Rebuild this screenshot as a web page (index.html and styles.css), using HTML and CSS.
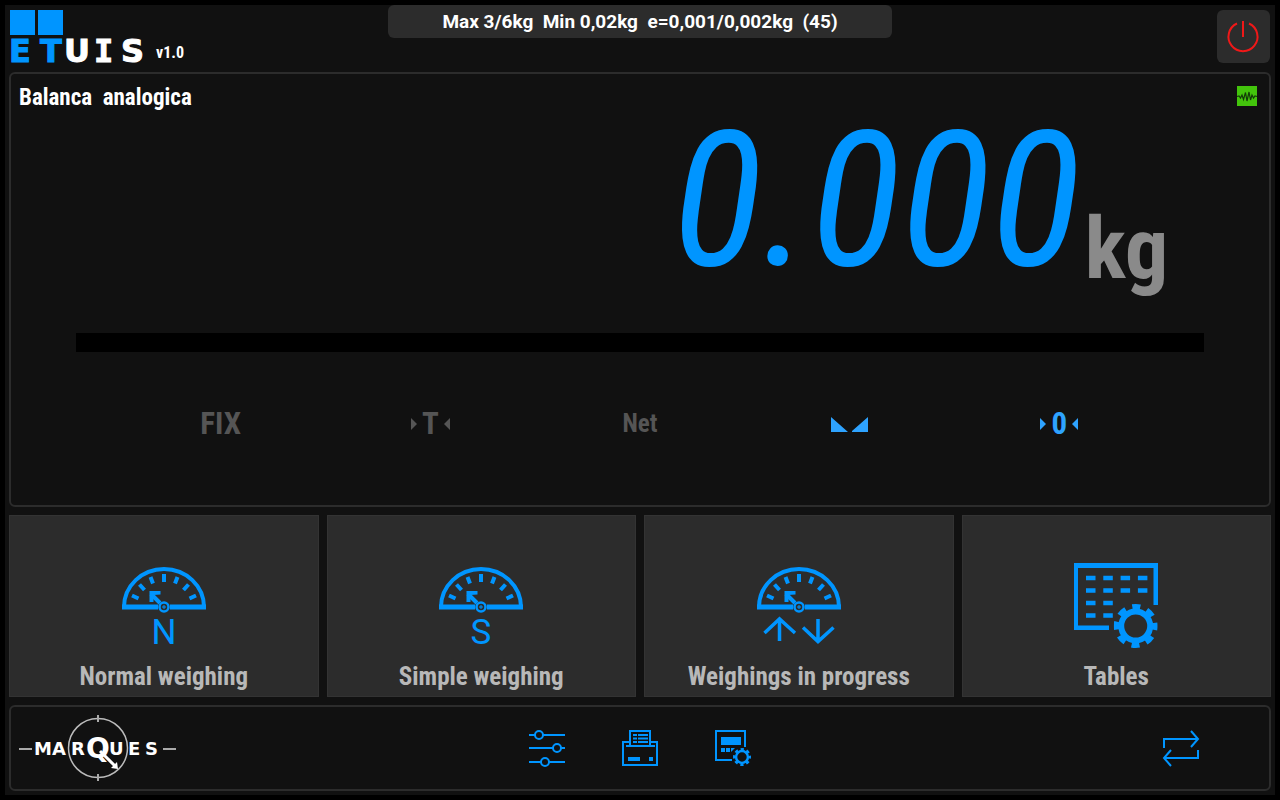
FILE: index.html
```html
<!DOCTYPE html>
<html lang="en">
<head>
    <meta charset="UTF-8">
    <meta name="viewport" content="width=device-width, initial-scale=1.0">
    <title>ETUIS v1.0</title>
    <link rel="stylesheet" href="styles.css">
</head>
<body>
    <!-- shared icon parts -->
    <svg class="defs" width="0" height="0" aria-hidden="true">
        <symbol id="gauge" viewBox="0 0 84 84">
            <path d="M2 44A40 38 0 0 1 82 44" fill="none" stroke="currentColor" stroke-width="4"/>
            <path d="M0 44H36M48 44H84" stroke="currentColor" stroke-width="5"/>
            <path d="M42 11V19M55.500 14L53 20.500M66.500 21.500L61.500 27M74 32.500L67.500 35.500M28.500 14L31 20.500M17.500 21.500L22.500 27M10 32.500L16.500 35.500" stroke="currentColor" stroke-width="4"/>
            <path d="M38 40L29 31" stroke="currentColor" stroke-width="4"/>
            <path d="M27.500 39V28H38.500V31.500L31.500 32V39Z" fill="currentColor"/>
            <circle cx="42" cy="44" r="4.500" fill="none" stroke="currentColor" stroke-width="2.500"/>
            <path d="M42 42V46M40 44H44" stroke="currentColor" stroke-width="1"/>
        </symbol>
        <symbol id="gear" viewBox="0 0 44 44">
            <circle cx="22" cy="22" r="14.500" fill="none" stroke="currentColor" stroke-width="6"/>
            <circle cx="22" cy="22" r="19" fill="none" stroke="currentColor" stroke-width="6" stroke-dasharray="8 6.923" stroke-dashoffset="4"/>
        </symbol>
    </svg>

    <div class="app">
        <header class="topbar">
            <div class="brand">
                <svg class="logo" viewBox="0 0 137 53" role="img" aria-label="ETUIS">
                    <path d="M0 0H25V25H0ZM28 0H53V25H28Z" fill="#0095ff"/>
                    <text class="blue" y="52" x="-1 30">ET</text>
                    <text class="white" y="52" x="54">U<tspan class="slab" x="84">I</tspan><tspan x="111">S</tspan></text>
                </svg>
                <span class="version">v1.0</span>
            </div>
            <div class="metrology">Max 3/6kg  Min 0,02kg  e=0,001/0,002kg  (45)</div>
            <button class="power" type="button" aria-label="Power off">
                <svg viewBox="0 0 32 32" aria-hidden="true">
                    <path d="M9 2.500A14.500 14.500 0 1 0 21 2.500M15 0V16" fill="none" stroke="#f01818" stroke-width="2"/>
                </svg>
            </button>
        </header>

        <main class="scale">
            <div class="scale-head">
                <h1>Balanca  analogica</h1>
                <svg class="signal" viewBox="0 0 20 20" role="img" aria-label="Analog signal">
                    <path d="M0 0H20V20H0Z" fill="#43c40c"/>
                    <path d="M0 10.500L2 10L3.500 12L5 9L6.500 13.500L8.500 6.500L10 15L12 6L13.500 14L15 9L16.500 12L18 10L20 10.500" fill="none" stroke="#123a08" stroke-width="1.200"/>
                </svg>
            </div>
            <div class="reading">
                <output class="value">0.000</output>
                <span class="unit">kg</span>
            </div>
            <div class="load-bar" role="meter" aria-label="Load" aria-valuemin="0" aria-valuemax="6" aria-valuenow="0"></div>
            <ul class="flags">
                <li>FIX</li>
                <li>
                    <svg viewBox="0 0 6 12" aria-hidden="true"><path d="M0 0L6 6L0 12Z"/></svg>
                    T
                    <svg viewBox="0 0 6 12" aria-hidden="true"><path d="M6 0L0 6L6 12Z"/></svg>
                </li>
                <li class="small">Net</li>
                <li class="on">
                    <svg class="stable" viewBox="0 0 37 15" role="img" aria-label="Stable"><path d="M0 0L17 15H0ZM37 0V15H21V14Z"/></svg>
                </li>
                <li class="on">
                    <svg viewBox="0 0 6 12" aria-hidden="true"><path d="M0 0L6 6L0 12Z"/></svg>
                    0
                    <svg viewBox="0 0 6 12" aria-hidden="true"><path d="M6 0L0 6L6 12Z"/></svg>
                </li>
            </ul>
        </main>

        <nav class="modes">
            <button type="button">
                <svg viewBox="0 0 84 84" aria-hidden="true">
                    <use href="#gauge"/>
                    <text x="42" y="81">N</text>
                </svg>
                Normal weighing
            </button>
            <button type="button">
                <svg viewBox="0 0 84 84" aria-hidden="true">
                    <use href="#gauge"/>
                    <text x="42" y="81">S</text>
                </svg>
                Simple weighing
            </button>
            <button type="button">
                <svg viewBox="0 0 84 84" aria-hidden="true">
                    <use href="#gauge"/>
                    <path d="M22.500 78V56M7.500 70L22.500 56L38 70M61 56V78M46 64.500L61 78.500L76.500 64.500" fill="none" stroke="currentColor" stroke-width="3.500"/>
                </svg>
                Weighings in progress
            </button>
            <button type="button">
                <svg viewBox="0 0 84 84" aria-hidden="true">
                    <path d="M0 0H84V42H79.500V5H4V62.500H35V67H0Z" fill="currentColor"/>
                    <path d="M12 15H74M12 27.500H74" stroke="currentColor" stroke-width="4.500" stroke-dasharray="9.500 7.800"/>
                    <path d="M12 40H39M12 52.500H39" stroke="currentColor" stroke-width="4.500" stroke-dasharray="9.500 7.800"/>
                    <use href="#gear" x="39.700" y="41" width="44" height="44"/>
                </svg>
                Tables
            </button>
        </nav>

        <footer class="toolbar">
            <svg class="marques" viewBox="0 0 158 66" role="img" aria-label="Marques">
                <circle cx="79" cy="33" r="29.500" fill="none" stroke="#bbb" stroke-width="1.500"/>
                <path d="M79 0V7M79 59V66M0 34H13M144 34H157" stroke="#aaa" stroke-width="2"/>
                <path d="M81 36L96 51" stroke="#fff" stroke-width="3"/>
                <path d="M99 54L92 53L98 47Z" fill="#fff"/>
                <text y="40" x="15 33 52">MAR</text>
                <text class="q" x="67" y="43">Q</text>
                <text y="40" x="90 109 126">UES</text>
            </svg>
            <div class="tools">
                <button type="button" aria-label="Settings">
                    <svg viewBox="0 0 36 36" aria-hidden="true">
                        <path d="M0 5H6M14 5H36M0 18H24M32 18H36M0 32H12M20 32H36"/>
                        <circle cx="10" cy="5" r="4"/>
                        <circle cx="28" cy="18" r="4"/>
                        <circle cx="16" cy="32" r="4"/>
                    </svg>
                </button>
                <button type="button" aria-label="Print">
                    <svg viewBox="0 0 36 36" aria-hidden="true">
                        <path d="M8 12H1V35H35V12H28M8 16V1H28V16M4 16H33"/>
                        <path d="M11 5H15M16 5H26M11 8.500H15M16 8.500H26M11 12H15M16 12H26"/>
                        <path class="solid" d="M6 27H18V31H6ZM27 27H31V31H27Z"/>
                    </svg>
                </button>
                <button type="button" aria-label="Device setup">
                    <svg viewBox="0 0 36 36" aria-hidden="true">
                        <path d="M30 17V1H1V30H17"/>
                        <path class="solid" d="M6 7H26V15H6ZM6 18H10V22H6ZM11 18H15V22H11ZM16 18H20L16 22Z"/>
                        <use href="#gear" x="18" y="18" width="18" height="18"/>
                    </svg>
                </button>
            </div>
            <button class="swap" type="button" aria-label="Switch scale">
                <svg viewBox="0 0 36 36" aria-hidden="true">
                    <path d="M1 18V9H35M28 1L35 9L28 17M35 20V28H1M8 20L1 28L8 36"/>
                </svg>
            </button>
        </footer>
    </div>
</body>
</html>
```
FILE: styles.css
```css
:root {
    --accent: #0095ff;
    --surface: #111;
    --raised: #2c2c2c;
    --muted: #555;
    --condensed: "Roboto Condensed", "Liberation Sans Narrow", Roboto, sans-serif;
}

* {
    margin: 0;
    padding: 0;
    box-sizing: border-box;
}

body {
    min-height: 100vh;
    padding: 5px;
    display: flex;
    background: #000;
    color: #fff;
    font-family: var(--condensed);
    font-weight: bold;
}

button {
    border: none;
    background: none;
    color: inherit;
    font: inherit;
    cursor: pointer;
}

svg {
    display: block;
    overflow: visible;
}

.defs {
    display: none;
}

.app {
    flex: 1;
    display: flex;
    flex-direction: column;
    gap: 8px;
    padding: 0 4px 4px;
    background: var(--surface);
}

/* Top bar */
.topbar {
    display: grid;
    grid-template-columns: 1fr 40% 1fr;
    align-items: start;
    padding: 0 1px 1px;
}

.brand {
    display: flex;
    align-items: flex-end;
    gap: 9px;
    padding-top: 5px;
}

.logo {
    width: 137px;
    height: 53px;
}

.logo text {
    font: bold 32px "DejaVu Sans", sans-serif;
    stroke-width: 1;
}

.logo .slab {
    font-family: "DejaVu Sans Mono", monospace;
}

.logo .blue {
    fill: var(--accent);
    stroke: var(--accent);
}

.logo .white {
    fill: #fff;
    stroke: #fff;
}

.version {
    font-size: 16px;
    line-height: 20px;
}

.metrology {
    border-radius: 6px;
    background: var(--raised);
    font: bold 19px/33px Roboto, sans-serif;
    text-align: center;
    white-space: pre;
}

.power {
    justify-self: end;
    display: grid;
    place-items: center;
    width: 53px;
    height: 53px;
    margin-top: 5px;
    border-radius: 6px;
    background: var(--raised);
}

.power svg {
    width: 32px;
    height: 32px;
}

/* Scale display */
.scale {
    flex: 1;
    display: flex;
    flex-direction: column;
    border: 2px solid var(--raised);
    border-radius: 6px;
}

.scale-head {
    display: flex;
    justify-content: space-between;
    padding: 9px 12px 0 8px;
}

h1 {
    font-size: 23px;
    line-height: 30px;
    white-space: pre;
}

.signal {
    width: 20px;
    height: 20px;
    margin-top: 3px;
}

.reading {
    display: flex;
    justify-content: flex-end;
    align-items: flex-start;
    gap: 4px;
    height: 220px;
    padding-right: 8%;
}

.value {
    color: var(--accent);
    font-size: 188px;
    font-weight: normal;
    font-style: italic;
    line-height: 176px;
}

.unit {
    margin-top: 86px;
    color: #8a8a8a;
    font-size: 86px;
    line-height: 100px;
}

.load-bar {
    height: 19px;
    margin: 0 65px;
    background: #000;
}

.flags {
    display: grid;
    grid-template-columns: repeat(5, 1fr);
    align-items: center;
    width: calc(100% * 5 / 6);
    margin: 52px auto 0;
    list-style: none;
    color: var(--muted);
    font: bold 31px/40px var(--condensed);
}

.flags li {
    display: flex;
    justify-content: center;
    align-items: center;
    gap: 5px;
}

.flags .small {
    font-size: 25px;
}

.flags .on {
    color: #2ea3ff;
}

.flags svg {
    width: 6px;
    height: 12px;
    fill: currentColor;
}

.flags .stable {
    width: 37px;
    height: 15px;
}

/* Mode buttons */
.modes {
    display: grid;
    grid-template-columns: repeat(4, 1fr);
    gap: 8px;
}

.modes button {
    display: flex;
    flex-direction: column;
    align-items: center;
    gap: 15px;
    padding: 47px 0 4px;
    border: 1px solid #333;
    background: var(--raised);
    color: #b8b8b8;
    font-size: 25px;
    line-height: 30px;
}

.modes svg {
    width: 84px;
    height: 84px;
    color: var(--accent);
}

.modes text {
    fill: currentColor;
    font: 35px Roboto, sans-serif;
    text-anchor: middle;
}

/* Bottom toolbar */
.toolbar {
    display: grid;
    grid-template-columns: 1fr auto 1fr;
    align-items: center;
    height: 86px;
    padding: 0 8px;
    border: 2px solid var(--raised);
    border-radius: 6px;
}

.marques {
    width: 158px;
    height: 66px;
}

.marques text {
    fill: #fff;
    font: bold 18px "DejaVu Sans", sans-serif;
}

.marques .q {
    font-size: 28px;
}

.tools {
    display: flex;
    gap: 57px;
}

.toolbar button svg {
    width: 36px;
    height: 36px;
    color: var(--accent);
    fill: none;
    stroke: currentColor;
    stroke-width: 2;
}

.toolbar .solid {
    fill: currentColor;
    stroke: none;
}

.swap {
    justify-self: end;
    margin-right: 62px;
}
```
